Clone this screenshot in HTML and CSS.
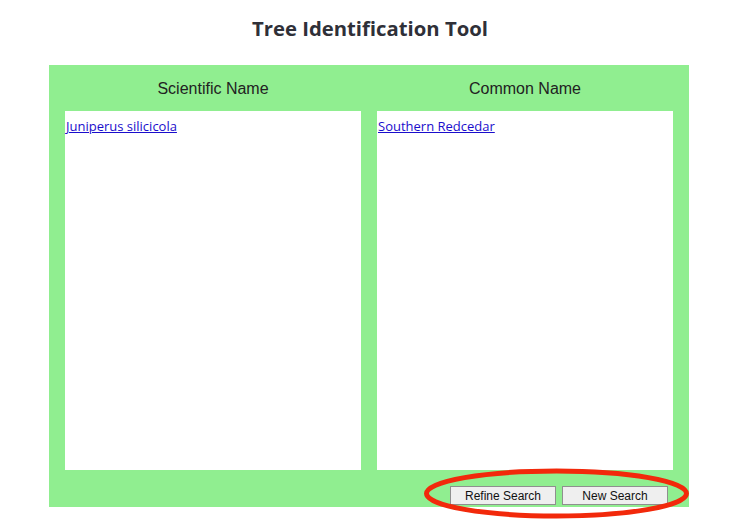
FILE: index.html
```html
<!DOCTYPE html>
<html>
<head>
<meta charset="utf-8">
<link rel="stylesheet" href="styles.css">
</head>
<body>
<h1 class="title">Tree Identification Tool</h1>
<div class="panel">
  <div class="cols">
    <div class="col">
      <h2 class="col-head">Scientific Name</h2>
      <div class="box"><a href="#" class="link">Juniperus silicicola</a></div>
    </div>
    <div class="col">
      <h2 class="col-head">Common Name</h2>
      <div class="box"><a href="#" class="link">Southern Redcedar</a></div>
    </div>
  </div>
  <div class="actions">
    <button class="btn">Refine Search</button>
    <button class="btn">New Search</button>
  </div>
  <svg class="mark" width="275" height="60" viewBox="0 0 275 60">
    <ellipse cx="137.5" cy="30.5" rx="130" ry="22.5" fill="none" stroke="#f2290b" stroke-width="5"/>
  </svg>
</div>
</body>
</html>
```
FILE: styles.css
```css
html, body {
  margin: 0;
  padding: 0;
  background: #fff;
}
body {
  width: 735px;
  height: 527px;
  overflow: hidden;
  font-family: "Liberation Sans", Arial, sans-serif;
}
.title {
  margin: 0;
  padding-top: 14px;
  height: 65px;
  box-sizing: border-box;
  text-align: center;
  font-family: "Open Sans", sans-serif;
  font-weight: 700;
  font-size: 20.3px;
  line-height: 28px;
  color: #2f3038;
  padding-left: 5px;
}
.panel {
  position: relative;
  width: 640px;
  margin-left: 49px;
  background: #90ee90;
  padding: 0 16px 2px;
  box-sizing: border-box;
}
.cols {
  display: flex;
  gap: 16px;
}
.col {
  flex: 1;
  display: flex;
  flex-direction: column;
}
.col-head {
  margin: 0;
  height: 46px;
  line-height: 47px;
  text-align: center;
  font-weight: 400;
  font-size: 16px;
  color: #222;
}
.box {
  background: #fff;
  height: 359px;
  padding: 6px 1px;
  box-sizing: border-box;
}
.link {
  font-family: "Open Sans", sans-serif;
  font-size: 13px;
  color: #1a0dcc;
  text-decoration: underline;
}
.actions {
  display: flex;
  justify-content: flex-end;
  gap: 6px;
  padding: 16px 5px 0 0;
}
.btn {
  width: 106px;
  height: 19px;
  padding: 0;
  font-family: "Liberation Sans", Arial, sans-serif;
  font-size: 12px;
  color: #111;
  background: #efefef;
  border: 1px solid #8f8f8f;
  border-radius: 0;
}
.mark {
  position: absolute;
  left: 370px;
  top: 398px;
  pointer-events: none;
}
```
